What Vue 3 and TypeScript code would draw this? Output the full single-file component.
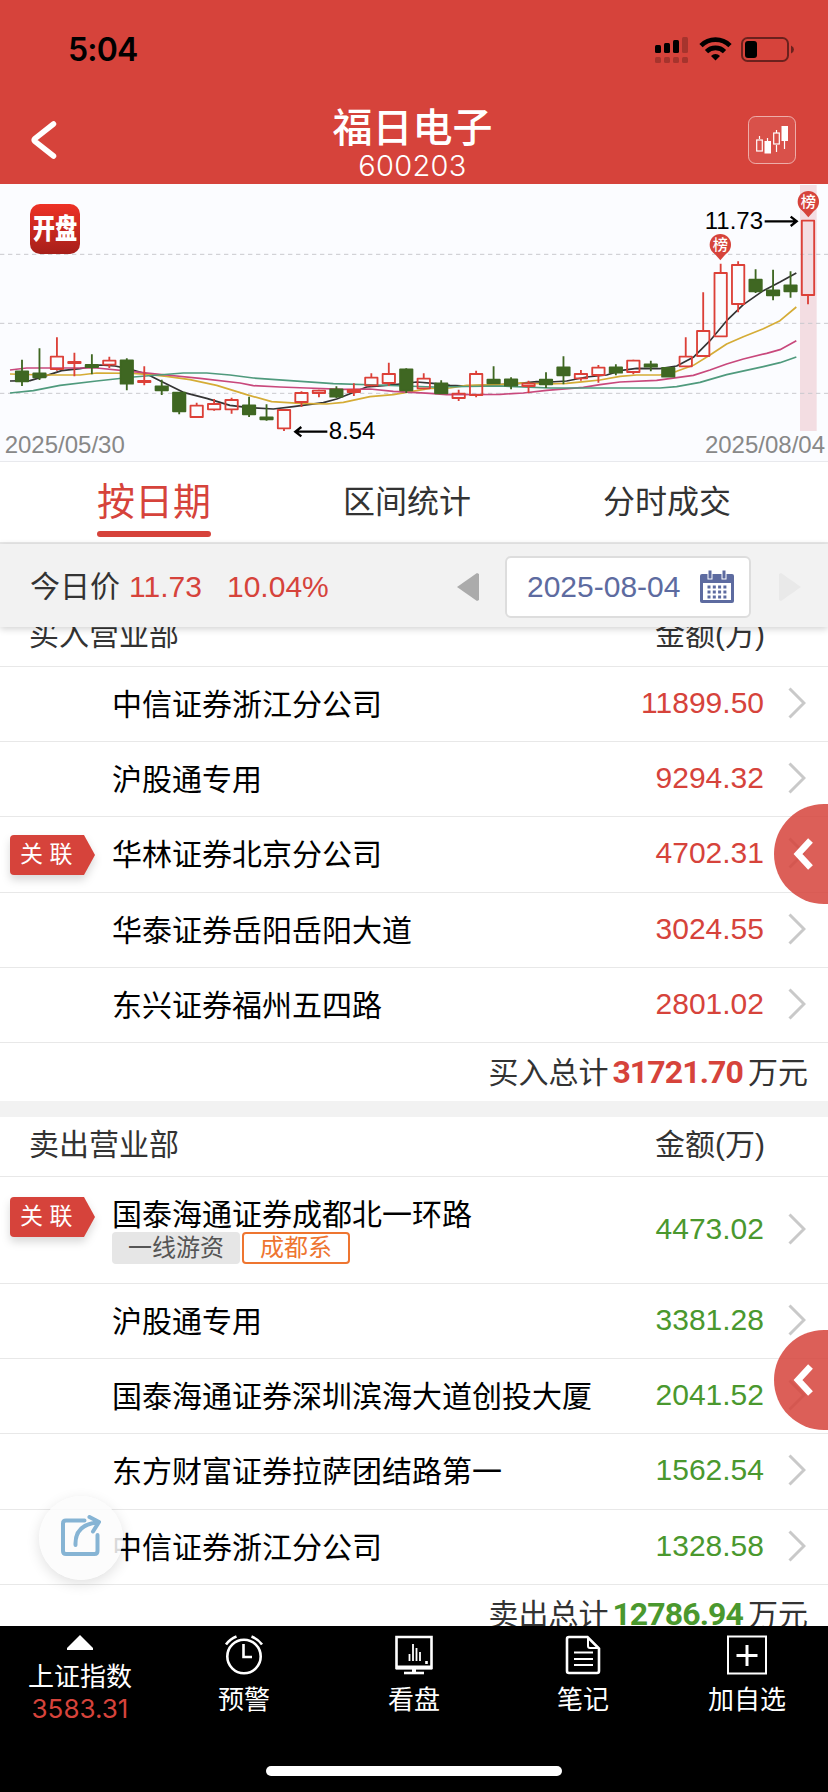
<script setup lang="ts">
interface Row {
  name: string
  amount: string
  linked?: boolean
  tags?: { text: string; kind: 'plain' | 'accent' }[]
}
interface Section {
  title: string
  kind: 'buy' | 'sell'
  totalLabel: string
  total: string
  rows: Row[]
}

const sections: Section[] = [
  {
    title: '买入营业部',
    kind: 'buy',
    totalLabel: '买入总计',
    total: '31721.70',
    rows: [
      { name: '中信证券浙江分公司', amount: '11899.50' },
      { name: '沪股通专用', amount: '9294.32' },
      { name: '华林证券北京分公司', amount: '4702.31', linked: true },
      { name: '华泰证券岳阳岳阳大道', amount: '3024.55' },
      { name: '东兴证券福州五四路', amount: '2801.02' },
    ],
  },
  {
    title: '卖出营业部',
    kind: 'sell',
    totalLabel: '卖出总计',
    total: '12786.94',
    rows: [
      {
        name: '国泰海通证券成都北一环路',
        amount: '4473.02',
        linked: true,
        tags: [
          { text: '一线游资', kind: 'plain' },
          { text: '成都系', kind: 'accent' },
        ],
      },
      { name: '沪股通专用', amount: '3381.28' },
      { name: '国泰海通证券深圳滨海大道创投大厦', amount: '2041.52' },
      { name: '东方财富证券拉萨团结路第一', amount: '1562.54' },
      { name: '中信证券浙江分公司', amount: '1328.58' },
    ],
  },
]

// direction, high, body top, body bottom, low (chart units, three per pixel)
type Bar = ['u' | 'd', number, number, number, number]
const bars: Bar[] = [
  ['d', 527, 562, 592, 606], ['d', 493, 568, 580, 588], ['u', 460, 518, 555, 560],
  ['u', 506, 534, 537, 577], ['d', 511, 543, 549, 571], ['u', 518, 530, 542, 552],
  ['d', 523, 529, 599, 619], ['u', 547, 591, 594, 604], ['d', 587, 607, 619, 633],
  ['d', 624, 626, 682, 691], ['u', 656, 665, 699, 701], ['u', 645, 660, 676, 680],
  ['u', 641, 648, 676, 689], ['d', 638, 664, 691, 699], ['d', 661, 700, 706, 710],
  ['u', 676, 678, 733, 741], ['u', 622, 627, 654, 669], ['u', 617, 620, 627, 640],
  ['d', 607, 616, 638, 642], ['u', 598, 618, 624, 636], ['u', 568, 581, 604, 607],
  ['u', 536, 570, 597, 606], ['d', 553, 556, 619, 627], ['u', 568, 584, 613, 616],
  ['d', 589, 598, 628, 630], ['u', 617, 629, 642, 651], ['u', 560, 570, 633, 640],
  ['d', 547, 587, 598, 600], ['d', 580, 586, 605, 616], ['u', 590, 599, 606, 627],
  ['d', 565, 587, 601, 612], ['d', 517, 550, 574, 601], ['u', 558, 570, 583, 590],
  ['u', 543, 551, 573, 596], ['d', 541, 550, 566, 574], ['u', 527, 530, 564, 571],
  ['d', 530, 541, 548, 562], ['d', 551, 552, 578, 579], ['u', 460, 518, 547, 549],
  ['u', 325, 441, 516, 518], ['u', 239, 267, 457, 459], ['u', 232, 243, 360, 385],
  ['d', 256, 287, 322, 327], ['d', 257, 319, 334, 349], ['d', 262, 304, 322, 341],
  ['u', 108, 110, 333, 361],
]
const candles = bars.map(([dir, high, top, bottom, low], i) => ({
  dir, high, top, bottom, low, x: 66 + i * 52.4,
}))

const averages = [
  { cls: 'ma5', points: '30,591 90,590 130,578 185,560 240,554 300,543 345,546 380,553 440,570 480,590 550,625 620,643 690,664 740,670 820,675 880,668 970,656 1010,645 1050,629 1100,609 1150,605 1200,600 1250,594 1300,598 1350,604 1400,606 1500,602 1560,598 1610,593 1650,594 1700,591 1760,579 1820,573 1865,559 1910,553 1980,554 2030,546 2080,520 2130,470 2180,410 2230,362 2290,320 2340,294 2389,267' },
  { cls: 'ma10', points: '30,570 130,573 240,573 290,567 400,568 450,572 500,577 570,587 650,604 740,632 815,653 900,658 980,660 1030,655 1110,638 1180,632 1250,620 1290,613 1350,612 1400,604 1500,602 1560,597 1640,600 1700,598 1760,592 1800,588 1860,577 1910,573 1980,573 2030,562 2080,544 2130,513 2180,480 2230,458 2290,434 2340,410 2389,369' },
  { cls: 'ma20', points: '30,558 80,552 290,552 400,563 500,573 600,583 720,597 760,605 840,609 920,612 1030,616 1110,615 1180,622 1290,628 1340,632 1500,631 1570,627 1640,619 1750,610 1800,602 1860,594 1970,589 2080,574 2130,558 2180,540 2230,525 2300,508 2340,497 2389,470' },
  { cls: 'ma30', points: '30,627 100,620 180,604 290,591 400,579 550,567 620,567 690,573 760,582 870,590 1000,599 1130,603 1300,609 1500,606 1650,612 1980,612 2030,608 2100,595 2180,572 2290,548 2340,536 2389,519' },
]
const pins = [
  { x: 2425, y: 53 },
  { x: 2161, y: 182 },
]
</script>

<template>
  <div class="screen">
    <header class="top">
      <div class="status">
        <span class="time">5:04</span>
        <svg class="status-icons" width="140" height="28" viewBox="0 0 140 28">
          <g>
            <rect x="0" y="8" width="6" height="8" rx="1.5" />
            <rect x="9" y="6" width="6" height="10" rx="1.5" />
            <rect x="18" y="3" width="6" height="13" rx="1.5" />
            <g class="dim">
              <rect x="27" y="0" width="6" height="16" rx="1.5" />
              <rect v-for="n in 4" :key="n" :x="(n - 1) * 9" y="20" width="6" height="6" rx="1.5" />
            </g>
          </g>
          <g fill="none" stroke="#000" stroke-width="4.6">
            <path d="M46 8.6 A20.5 20.5 0 0 1 75 8.6" />
            <path d="M51.5 14.6 A12.8 12.8 0 0 1 69.5 14.6" />
          </g>
          <path d="M60.5 23.5 L56 18.9 A6.5 6.5 0 0 1 65 18.9 Z" />
          <rect class="shell" x="87" y="1" width="46" height="23" rx="5.5" />
          <rect x="90" y="4" width="12" height="17" rx="3" />
          <path class="cap" d="M136 8.5 Q139 10 139 12.5 Q139 15 136 16.5 Z" />
        </svg>
      </div>
      <div class="titlebar">
        <svg class="back" width="28" height="40" viewBox="0 0 28 40">
          <path d="M24.500 4 L6 18.500 Q4.500 20 6 21.500 L24.500 36" />
        </svg>
        <div class="heading">
          <div class="stock">福日电子</div>
          <div class="code">600203</div>
        </div>
        <svg class="chart-btn" width="48" height="48" viewBox="0 0 48 48">
          <rect class="frame" x=".5" y=".5" width="47" height="47" rx="7" />
          <path class="wick" d="M11.5 20v3M19.5 22v3M28.5 14v3M28.5 29v7M36.5 24v9" />
          <rect class="hollow" x="8.7" y="24" width="5.6" height="11" />
          <rect x="16.5" y="25" width="6.5" height="12.5" class="solid" />
          <rect class="hollow" x="25.7" y="17" width="5.6" height="11" />
          <rect x="33.5" y="10" width="6.5" height="15" class="solid" />
        </svg>
      </div>
    </header>

    <section class="chart">
      <svg width="828" height="277" viewBox="0 0 2484 831">
        <defs>
          <linearGradient id="badge" x1="0" y1="0" x2="0" y2="1">
            <stop offset="0" stop-color="#ee3226" />
            <stop offset="1" stop-color="#a61f1a" />
          </linearGradient>
        </defs>
        <rect class="band" x="2400" y="3" width="50" height="738" />
        <path class="grid" d="M0 211H2484M0 418H2484M0 628H2484" />
        <polyline v-for="a in averages" :key="a.cls" :class="['avg', a.cls]" :points="a.points" />
        <g v-for="(c, i) in candles" :key="i" :class="c.dir">
          <path :d="`M${c.x} ${c.high}V${c.top}M${c.x} ${c.bottom}V${c.low}`" />
          <rect :x="c.x - 18.5" :y="c.top" width="37" :height="c.bottom - c.top" />
        </g>
        <g v-for="p in pins" :key="p.x" class="pin">
          <path :d="`M${p.x - 20} ${p.y + 24}L${p.x} ${p.y + 47}L${p.x + 20} ${p.y + 24}Z`" />
          <circle :cx="p.x" :cy="p.y" r="32" />
          <text :x="p.x" :y="p.y + 17" text-anchor="middle">榜</text>
        </g>
        <g class="arrow">
          <path d="M982 743H886M904 729L886 743L904 757" />
          <path d="M2294 112H2390M2372 98L2390 112L2372 126" />
        </g>
        <text class="mark" x="986" y="765">8.54</text>
        <text class="mark" x="2289" y="135" text-anchor="end">11.73</text>
        <text class="date" x="14" y="807">2025/05/30</text>
        <text class="date" x="2475" y="807" text-anchor="end">2025/08/04</text>
        <rect x="90" y="60" width="150" height="150" rx="30" fill="url(#badge)" />
        <text class="open" transform="translate(165 166) scale(.88 1.12)" text-anchor="middle">开盘</text>
      </svg>
    </section>

    <nav class="tabs">
      <span class="tab active">按日期</span>
      <span class="tab">区间统计</span>
      <span class="tab">分时成交</span>
    </nav>

    <div class="quote">
      <span class="label">今日价</span>
      <span class="price">11.73</span>
      <span class="change">10.04%</span>
      <svg class="prev" width="22" height="28" viewBox="0 0 22 28"><path d="M22 1V27L20 28L0 14L20 0Z" /></svg>
      <div class="picker">
        <span>2025-08-04</span>
        <svg width="34" height="34" viewBox="0 0 34 34">
          <path d="M2 4H32Q34 4 34 6V31Q34 33 32 33H2Q0 33 0 31V6Q0 4 2 4Z" fill="#5d6ba0" />
          <rect x="3" y="13" width="28" height="17" fill="#fff" />
          <rect x="8" y="0" width="4" height="9" fill="#5d6ba0" stroke="#fff" />
          <rect x="22" y="0" width="4" height="9" fill="#5d6ba0" stroke="#fff" />
          <path d="M7.5 17H28M7.5 22H28M7.5 27H28" stroke="#5d6ba0" stroke-width="3" stroke-dasharray="3 2.3" />
        </svg>
      </div>
      <svg class="next" width="22" height="28" viewBox="0 0 22 28"><path d="M0 1V27L2 28L22 14L2 0Z" /></svg>
    </div>

    <main class="list">
      <section v-for="s in sections" :key="s.kind" :class="['block', s.kind]">
        <div class="head"><span>{{ s.title }}</span><span>金额(万)</span></div>
        <div v-for="r in s.rows" :key="r.name" :class="['row', { tall: r.tags }]">
          <div class="link-col">
            <div v-if="r.linked" class="link">
              <svg width="85" height="40" viewBox="0 0 85 40"><path d="M4 0H74L85 20L74 40H4Q0 40 0 36V4Q0 0 4 0Z" /></svg>
              <span>关 联</span>
            </div>
          </div>
          <div class="info">
            <div class="name">{{ r.name }}</div>
            <div v-if="r.tags" class="tags">
              <span v-for="t in r.tags" :key="t.text" :class="['tag', t.kind]">{{ t.text }}</span>
            </div>
          </div>
          <span class="amount">{{ r.amount }}</span>
          <svg class="go" width="18" height="32" viewBox="0 0 18 32"><path d="M1.5 1.5L16 16L1.5 30.5" /></svg>
        </div>
        <div class="total">{{ s.totalLabel }}<b>{{ s.total }}</b>万元</div>
      </section>
    </main>

    <footer class="bottom">
      <div class="item index">
        <svg width="26" height="15" viewBox="0 0 26 15"><path d="M13 0L26 13V15H0V13Z" fill="#fff" /></svg>
        <span>上证指数</span>
        <span class="index-value">3583.31</span>
      </div>
      <div class="item">
        <svg width="40" height="40" viewBox="0 0 40 40">
          <circle cx="20" cy="21.5" r="16.7" />
          <path d="M19.5 9V22H28M2 9.5Q6 4 12.5 1.5M38 9.5Q34 4 27.5 1.5" />
        </svg>
        <span>预警</span>
      </div>
      <div class="item">
        <svg width="40" height="40" viewBox="0 0 40 40">
          <path d="M2.5 2H37.5V33H2.5Z" />
          <path d="M2 32.5H38" stroke-width="4" />
          <path d="M10 38H30" /><path d="M20 34V38" stroke-width="4" />
          <path d="M15.5 19V26M19 9V26M22.5 13V26M26 17V26" stroke-width="1.8" />
          <path d="M32.500 26V29" />
        </svg>
        <span>看盘</span>
      </div>
      <div class="item">
        <svg width="40" height="40" viewBox="0 0 40 40">
          <path d="M6 2H24.5L36 13.5V36Q36 38 34 38H6Q4 38 4 36V4Q4 2 6 2Z" />
          <path d="M25 2V11Q25 13 27 13H36" stroke-width="2" />
          <path d="M11 17.5H30M11 24H30M11 30H30" stroke-width="2" />
        </svg>
        <span>笔记</span>
      </div>
      <div class="item">
        <svg width="40" height="40" viewBox="0 0 40 40">
          <rect x="1" y="1.5" width="38" height="37" stroke-width="2" />
          <path d="M20 10V31M9.5 20.5H30.5" stroke-width="3" />
        </svg>
        <span>加自选</span>
      </div>
      <div class="home-bar"></div>
    </footer>

    <div v-for="n in 2" :key="n" :class="['drawer', `drawer-${n}`]">
      <svg width="22" height="32" viewBox="0 0 22 32"><path d="M18.5 2.5L6 16L18.5 29.5" /></svg>
    </div>
    <div class="share">
      <svg width="40" height="42" viewBox="0 0 40 42">
        <path d="M23.5 5.5H5Q2 5.5 2 8.5V36Q2 39 5 39H33.5Q36.5 39 36.5 36V20" />
        <path d="M14.5 30C14 17 21 9 36 7.5M28.500 2L38 7L32 16.5" />
      </svg>
    </div>
  </div>
</template>

<style>
body {
  background: #fff;
}
</style>

<style scoped>
.screen {
  position: relative;
  display: flex;
  flex-direction: column;
  width: 828px;
  height: 1792px;
  overflow: hidden;
  background: #fff;
  color: #333;
  font-family: "Liberation Sans", "Noto Sans CJK SC", sans-serif;
  font-size: 30px;
}
.screen * {
  box-sizing: border-box;
}
svg {
  display: block;
  flex: none;
}
.top {
  flex: none;
  height: 184px;
  background: #d6433b;
  color: #fff;
}
.status {
  display: flex;
  justify-content: space-between;
  height: 98px;
  padding: 37px 33px 0 68px;
}
.time {
  font: 600 32px/26px Inter, sans-serif;
  letter-spacing: -0.8px;
  color: #000;
}
.dim {
  opacity: 0.22;
}
.status-icons .shell {
  fill: none;
  stroke: #000;
  stroke-width: 2;
  opacity: 0.5;
}
.status-icons .cap {
  opacity: 0.5;
}
.titlebar {
  display: flex;
  justify-content: space-between;
  height: 86px;
  padding: 0 32px 0 29px;
}
.back {
  margin: 22px 20px 0 0;
}
.back path {
  fill: none;
  stroke: #fff;
  stroke-width: 5.5;
  stroke-linecap: round;
}
.heading {
  text-align: center;
}
.stock {
  margin-top: 5px;
  font-size: 40px;
  font-weight: 500;
  line-height: 50px;
}
.code {
  font: 300 29px/25px Inter, sans-serif;
  letter-spacing: 0.3px;
}
.chart-btn {
  margin-top: 18px;
}
.frame {
  fill: rgba(255, 255, 255, 0.08);
  stroke: rgba(255, 255, 255, 0.55);
}
.wick,
.hollow {
  fill: none;
  stroke: #fff;
  stroke-width: 1.2;
}
.solid {
  fill: #fff;
}
.chart {
  flex: none;
  height: 278px;
  background: #fbfcff;
  border-bottom: 1px solid #e8e9ed;
}
.band {
  fill: #f3dde2;
}
.grid {
  fill: none;
  stroke: #c9c9ce;
  stroke-width: 3;
  stroke-dasharray: 13 11;
}
.avg {
  fill: none;
  stroke-width: 5;
  stroke-linejoin: round;
}
.ma5 { stroke: #333; }
.ma10 { stroke: #d5ac36; }
.ma20 { stroke: #c8487c; }
.ma30 { stroke: #4f9a7d; }
.u path,
.u rect {
  fill: none;
  stroke: #dc4038;
  stroke-width: 5.5;
}
.u rect,
.d rect {
  stroke-linejoin: round;
}
.d path,
.d rect {
  fill: #3f6722;
  stroke: #3f6722;
  stroke-width: 5.5;
}
.pin path,
.pin circle {
  fill: #d6433b;
}
.pin text {
  fill: #fff;
  font-size: 46px;
  font-weight: 500;
}
.arrow path {
  fill: none;
  stroke: #000;
  stroke-width: 7;
}
.mark {
  font-size: 72px;
  fill: #000;
}
.date {
  font-size: 72px;
  fill: #888;
}
.open {
  font-size: 76px;
  font-weight: 900;
  fill: #fff;
}
.tabs {
  flex: none;
  display: flex;
  justify-content: space-between;
  align-items: flex-start;
  height: 82px;
  padding: 0 97px;
  border-bottom: 2px solid #e9e9e9;
  font-size: 32px;
}
.tab {
  height: 75px;
  line-height: 81px;
}
.active {
  position: relative;
  font-size: 38px;
  color: #d6433b;
}
.active::after {
  content: "";
  position: absolute;
  left: 0;
  right: 0;
  bottom: 0;
  height: 6px;
  border-radius: 3px;
  background: #d6433b;
}
.quote {
  flex: none;
  position: relative;
  z-index: 1;
  display: flex;
  align-items: center;
  height: 83px;
  padding: 2px 27px 0 30px;
  background: #f2f2f2;
  box-shadow: 0 2px 7px rgba(0, 0, 0, 0.18);
}
.quote > span {
  line-height: 40px;
}
.price {
  width: 98px;
  margin-left: 9px;
  color: #d6433b;
}
.change {
  color: #d6433b;
}
.prev {
  margin-left: auto;
  fill: #ababab;
}
.picker {
  display: flex;
  align-items: center;
  justify-content: space-between;
  width: 246px;
  height: 62px;
  margin: 0 28px 0 26px;
  padding: 0 15px 0 20px;
  border: 2px solid #ddd;
  border-radius: 6px;
  background: #fff;
  color: #5d6ba0;
}
.next {
  fill: #e9e9e9;
}
.list {
  flex: none;
  height: 999px;
  overflow: hidden;
}
.block {
  margin-bottom: 16px;
  box-shadow: 0 16px 0 #f2f2f2;
}
.block:first-child {
  margin-top: -20px;
}
.head {
  display: flex;
  justify-content: space-between;
  height: 60px;
  padding: 0 63px 0 29px;
  border-bottom: 1px solid #e8e8e8;
  line-height: 56px;
}
.row {
  display: flex;
  align-items: center;
  height: 75.2px;
  padding-right: 22px;
  border-bottom: 1px solid #e8e8e8;
}
.row.tall {
  height: 107px;
}
.link-col {
  width: 112px;
  padding-left: 10px;
}
.tall .link-col {
  margin-bottom: 28px;
}
.link {
  display: grid;
  margin-top: 2px;
}
.link > * {
  grid-area: 1 / 1;
}
.link svg {
  fill: #d6433b;
  filter: drop-shadow(0 5px 4px rgba(0, 0, 0, 0.15));
}
.link span {
  position: relative;
  padding-left: 10px;
  color: #fff;
  font-size: 23px;
  line-height: 38px;
}
.info {
  flex: 1;
}
.name {
  padding-top: 2px;
  color: #000;
  line-height: 40px;
  white-space: nowrap;
}
.tall .name {
  line-height: 36px;
}
.tags {
  display: flex;
  gap: 2px;
  margin-top: -1px;
}
.tag {
  height: 32px;
  padding: 0 16px;
  border-radius: 4px;
  font-size: 24px;
  line-height: 32px;
}
.plain {
  background: #e6e6e6;
  color: #555;
}
.accent {
  border: 2px solid #ee7530;
  line-height: 28px;
  color: #ee7530;
}
.amount {
  margin-top: -2px;
  color: #d6433b;
}
.sell .amount {
  color: #4a982e;
}
.go {
  margin: -2px 0 0 24px;
}
.go path {
  fill: none;
  stroke: #c9c9c9;
  stroke-width: 3;
}
.total {
  height: 58px;
  padding-right: 20px;
  text-align: right;
  line-height: 58px;
}
.total b {
  margin: 0 5px 0 4px;
  color: #d6433b;
  font-family: Roboto, sans-serif;
  font-size: 32px;
  letter-spacing: -0.9px;
}
.sell .total b {
  color: #4a982e;
}
.bottom {
  position: relative;
  z-index: 1;
  flex: none;
  display: grid;
  grid-template-columns: 160px 168px 172px 166px 162px;
  height: 166px;
  background: #000;
  color: #fff;
  font-size: 26px;
}
.item {
  display: flex;
  flex-direction: column;
  align-items: center;
  padding-top: 9px;
}
.item svg {
  fill: none;
  stroke: #fff;
  stroke-width: 2.6;
}
.item span {
  margin-top: 7px;
  line-height: 36px;
}
.item.index svg {
  stroke: none;
}
.item.index span {
  margin-top: 9px;
}
.item.index .index-value {
  margin-top: -4px;
  color: #d6433b;
  font-family: Inter, sans-serif;
  font-weight: 400;
  font-size: 26px;
}
.home-bar {
  position: absolute;
  left: 266px;
  bottom: 16px;
  width: 296px;
  height: 10px;
  border-radius: 5px;
  background: #fff;
}
.drawer {
  position: absolute;
  right: 0;
  display: flex;
  align-items: center;
  width: 54px;
  height: 100px;
  padding-left: 18px;
  border-radius: 50px 0 0 50px;
  background: rgba(214, 67, 59, 0.85);
}
.drawer path {
  fill: none;
  stroke: #fff;
  stroke-width: 6.5;
}
.drawer-1 {
  top: 804px;
}
.drawer-2 {
  top: 1330px;
}
.share {
  position: absolute;
  left: 39px;
  top: 1496px;
  display: grid;
  place-items: center;
  width: 84px;
  height: 84px;
  border-radius: 50%;
  background: rgba(251, 251, 251, 0.86);
  box-shadow: 0 4px 14px rgba(0, 0, 0, 0.12);
}
.share svg {
  margin-top: -5px;
}
.share path {
  fill: none;
  stroke: #86b4d4;
  stroke-width: 4;
  stroke-linecap: round;
  stroke-linejoin: round;
}
</style>
